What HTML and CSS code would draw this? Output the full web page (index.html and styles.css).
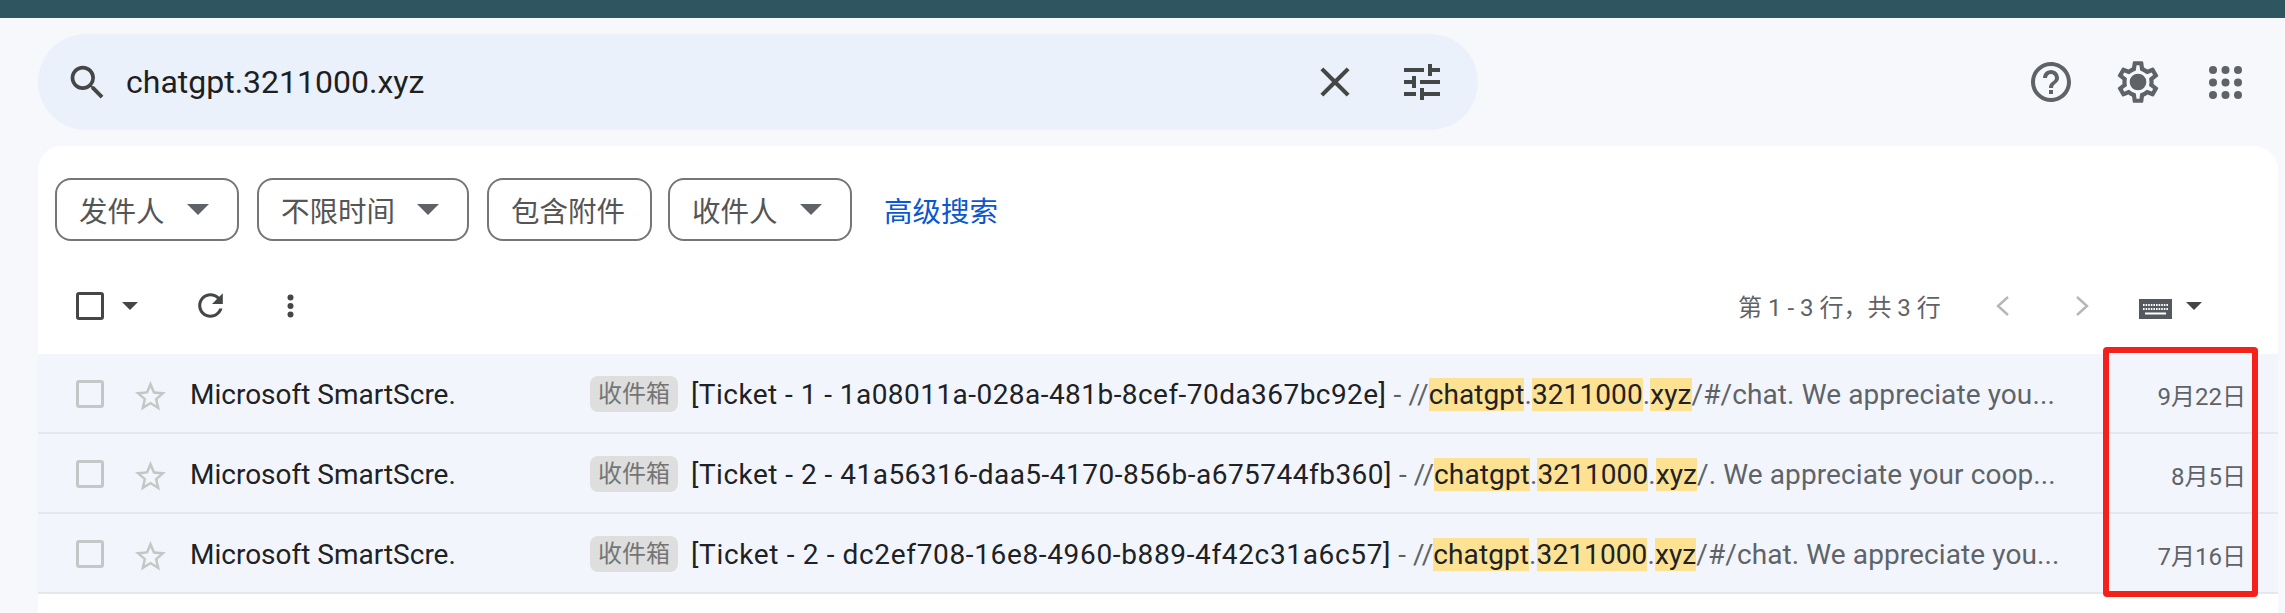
FILE: index.html
```html
<!DOCTYPE html>
<html lang="en">
<head>
  <meta charset="UTF-8">
  <meta name="viewport" content="width=device-width, initial-scale=1.0">
  <title>Search results</title>
  <link rel="stylesheet" href="styles.css">
</head>
<body>
  <div class="top-strip"></div>

  <header class="header">
    <div class="search-box">
      <svg class="icon-search" viewBox="0 0 24 24"><path d="M15.5 14h-.79l-.28-.27A6.471 6.471 0 0 0 16 9.5 6.5 6.5 0 1 0 9.5 16c1.61 0 3.09-.59 4.23-1.57l.27.28v.79l5 4.99L20.49 19l-4.99-5zm-6 0C7.01 14 5 11.99 5 9.5S7.01 5 9.5 5 14 7.01 14 9.5 11.99 14 9.5 14z"/></svg>
      <div class="search-text">chatgpt.3211000.xyz</div>
      <svg class="icon-close" viewBox="0 0 24 24"><path d="M19 6.41 17.59 5 12 10.59 6.41 5 5 6.41 10.59 12 5 17.59 6.41 19 12 13.41 17.59 19 19 17.59 13.41 12z"/></svg>
      <svg class="icon-tune" viewBox="0 0 24 24"><path d="M3 17v2h6v-2H3zM3 5v2h10V5H3zm10 16v-2h8v-2h-8v-2h-2v6h2zM7 9v2H3v2h4v2h2V9H7zm14 4v-2H11v2h10zm-6-4h2V7h4V5h-4V3h-2v6z"/></svg>
    </div>
    <div class="header-actions">
      <svg class="icon-help" viewBox="0 0 24 24"><path d="M11 18h2v-2h-2v2zm1-16C6.48 2 2 6.48 2 12s4.48 10 10 10 10-4.48 10-10S17.52 2 12 2zm0 18c-4.41 0-8-3.59-8-8s3.59-8 8-8 8 3.59 8 8-3.59 8-8 8zm0-14c-2.21 0-4 1.79-4 4h2c0-1.1.9-2 2-2s2 .9 2 2c0 2-3 1.75-3 5h2c0-2.25 3-2.5 3-5 0-2.21-1.79-4-4-4z"/></svg>
      <svg class="icon-gear" viewBox="0 0 24 24"><path d="M19.43 12.98c.04-.32.07-.64.07-.98 0-.34-.03-.66-.07-.98l2.11-1.65c.19-.15.24-.42.12-.64l-2-3.46c-.09-.16-.26-.25-.44-.25-.06 0-.12.01-.17.03l-2.49 1c-.52-.4-1.08-.73-1.69-.98l-.38-2.65C14.46 2.18 14.25 2 14 2h-4c-.25 0-.46.18-.49.42l-.38 2.65c-.61.25-1.17.59-1.69.98l-2.49-1c-.06-.02-.12-.03-.18-.03-.17 0-.34.09-.43.25l-2 3.46c-.13.22-.07.49.12.64l2.11 1.65c-.04.32-.07.65-.07.98 0 .33.03.66.07.98l-2.11 1.65c-.19.15-.24.42-.12.64l2 3.46c.09.16.26.25.44.25.06 0 .12-.01.17-.03l2.49-1c.52.4 1.08.73 1.69.98l.38 2.65c.03.24.24.42.49.42h4c.25 0 .46-.18.49-.42l.38-2.65c.61-.25 1.17-.59 1.69-.98l2.49 1c.06.02.12.03.18.03.17 0 .34-.09.43-.25l2-3.46c.12-.22.07-.49-.12-.64l-2.11-1.65zm-1.98-1.71c.04.31.05.52.05.73 0 .21-.02.43-.05.73l-.14 1.13.89.7 1.08.84-.7 1.21-1.27-.51-1.04-.42-.9.68c-.43.32-.84.56-1.25.73l-1.06.43-.16 1.13-.2 1.35h-1.4l-.19-1.35-.16-1.13-1.06-.43c-.43-.18-.83-.41-1.23-.71l-.91-.7-1.06.43-1.27.51-.7-1.21 1.08-.84.89-.7-.14-1.13c-.03-.31-.05-.54-.05-.74s.02-.43.05-.73l.14-1.13-.89-.7-1.08-.84.7-1.21 1.27.51 1.04.42.9-.68c.43-.32.84-.56 1.25-.73l1.06-.43.16-1.13.2-1.35h1.39l.19 1.35.16 1.13 1.06.43c.43.18.83.41 1.23.71l.91.7 1.06-.43 1.27-.51.7 1.21-1.07.85-.89.7.14 1.13z"/><circle cx="12" cy="12" r="4"/></svg>
      <svg class="icon-apps" viewBox="0 0 33 33"><circle cx="4" cy="4" r="4"/><circle cx="16.5" cy="4" r="4"/><circle cx="29" cy="4" r="4"/><circle cx="4" cy="16.5" r="4"/><circle cx="16.5" cy="16.5" r="4"/><circle cx="29" cy="16.5" r="4"/><circle cx="4" cy="29" r="4"/><circle cx="16.5" cy="29" r="4"/><circle cx="29" cy="29" r="4"/></svg>
    </div>
  </header>

  <main class="card">
    <div class="chips">
      <div class="chip chip-from">发件人<span class="caret"></span></div>
      <div class="chip chip-time">不限时间<span class="caret"></span></div>
      <div class="chip chip-attach">包含附件</div>
      <div class="chip chip-to">收件人<span class="caret"></span></div>
      <a class="advanced" href="#">高级搜索</a>
    </div>

    <div class="toolbar">
      <span class="check check-dark"></span>
      <span class="caret caret-small"></span>
      <svg class="icon-refresh" viewBox="0 0 24 24"><path d="M17.65 6.35C16.2 4.9 14.21 4 12 4c-4.42 0-7.99 3.58-7.99 8s3.57 8 7.99 8c3.73 0 6.84-2.55 7.73-6h-2.08c-.82 2.33-3.04 4-5.65 4-3.31 0-6-2.69-6-6s2.69-6 6-6c1.66 0 3.14.69 4.22 1.78L13 11h7V4l-2.35 2.35z"/></svg>
      <svg class="icon-more" viewBox="0 0 8 24"><circle cx="4" cy="3.5" r="3"/><circle cx="4" cy="12" r="3"/><circle cx="4" cy="20.5" r="3"/></svg>
      <div class="pager-text">第 1 - 3 行，共 3 行</div>
      <svg class="chevron chevron-left" viewBox="0 0 14 20"><polyline points="12,1 2,10 12,19"/></svg>
      <svg class="chevron chevron-right" viewBox="0 0 14 20"><polyline points="2,1 12,10 2,19"/></svg>
      <svg class="icon-keyboard" viewBox="0 0 33 20"><rect width="33" height="20"/><line class="keys" x1="4" y1="6" x2="29" y2="6"/><line class="keys" x1="4" y1="10" x2="29" y2="10"/><line class="keys keys-space" x1="6" y1="14.5" x2="27" y2="14.5"/></svg>
      <span class="caret caret-small caret-keyboard"></span>
    </div>

    <div class="row">
      <span class="check"></span>
      <svg class="icon-star" viewBox="0 0 24 24"><path d="M22 9.24l-7.19-.62L12 2 9.19 8.63 2 9.24l5.46 4.73L5.82 21 12 17.27 18.18 21l-1.63-7.03L22 9.24zM12 15.4l-3.76 2.27 1-4.28-3.32-2.88 4.38-.38L12 6.1l1.71 4.04 4.38.38-3.32 2.88 1 4.28L12 15.4z"/></svg>
      <div class="sender">Microsoft SmartScre.</div>
      <span class="label">收件箱</span>
      <div class="subject">[Ticket - 1 - 1a08011a-028a-481b-8cef-70da367bc92e]<span class="snippet"> - //<span class="hl">chatgpt</span>.<span class="hl">3211000</span>.<span class="hl">xyz</span>/#/chat. We appreciate you...</span></div>
      <div class="date">9月22日</div>
    </div>
    <div class="row">
      <span class="check"></span>
      <svg class="icon-star" viewBox="0 0 24 24"><path d="M22 9.24l-7.19-.62L12 2 9.19 8.63 2 9.24l5.46 4.73L5.82 21 12 17.27 18.18 21l-1.63-7.03L22 9.24zM12 15.4l-3.76 2.27 1-4.28-3.32-2.88 4.38-.38L12 6.1l1.71 4.04 4.38.38-3.32 2.88 1 4.28L12 15.4z"/></svg>
      <div class="sender">Microsoft SmartScre.</div>
      <span class="label">收件箱</span>
      <div class="subject subject-mid">[Ticket - 2 - 41a56316-daa5-4170-856b-a675744fb360]<span class="snippet"> - //<span class="hl">chatgpt</span>.<span class="hl">3211000</span>.<span class="hl">xyz</span>/. We appreciate your coop...</span></div>
      <div class="date">8月5日</div>
    </div>
    <div class="row">
      <span class="check"></span>
      <svg class="icon-star" viewBox="0 0 24 24"><path d="M22 9.24l-7.19-.62L12 2 9.19 8.63 2 9.24l5.46 4.73L5.82 21 12 17.27 18.18 21l-1.63-7.03L22 9.24zM12 15.4l-3.76 2.27 1-4.28-3.32-2.88 4.38-.38L12 6.1l1.71 4.04 4.38.38-3.32 2.88 1 4.28L12 15.4z"/></svg>
      <div class="sender">Microsoft SmartScre.</div>
      <span class="label">收件箱</span>
      <div class="subject subject-wide">[Ticket - 2 - dc2ef708-16e8-4960-b889-4f42c31a6c57]<span class="snippet"> - //<span class="hl">chatgpt</span>.<span class="hl">3211000</span>.<span class="hl">xyz</span>/#/chat. We appreciate you...</span></div>
      <div class="date">7月16日</div>
    </div>
  </main>

  <div class="red-box"></div>
</body>
</html>
```

FILE: styles.css
```css
html, body {
  height: 613px;
  overflow: hidden;
}
body {
  margin: 0;
  background-color: #f6f8fc;
  color: #1f1f1f;
  font-family: Roboto, "Noto Sans CJK SC", sans-serif;
}
svg {
  display: block;
  flex: none;
  fill: #444746;
}
.top-strip {
  height: 18px;
  background-color: #2f5560;
}

/* header */
.header {
  display: flex;
  align-items: center;
  height: 96px;
  padding: 16px 0 16px 38px;
}
.search-box {
  display: flex;
  align-items: center;
  width: 1440px;
  height: 96px;
  background-color: #eaf1fb;
  border-radius: 48px;
}
.icon-search {
  width: 45px;
  height: 45px;
  margin: 0 0 0 27px;
}
.search-text {
  flex: 1;
  margin-left: 16px;
  font-size: 32px;
  color: #1f1f1f;
}
.icon-close {
  width: 50px;
  height: 50px;
}
.icon-tune {
  width: 48px;
  height: 48px;
  margin: 0 32px 0 38px;
}
.header-actions {
  display: flex;
  align-items: center;
  margin-left: 549px;
}
.icon-help {
  width: 48px;
  height: 48px;
  fill: #5f6368;
}
.icon-gear {
  width: 50px;
  height: 50px;
  margin-left: 38px;
  fill: #5f6368;
}
.icon-apps {
  width: 33px;
  height: 33px;
  margin-left: 46px;
  fill: #5f6368;
}

/* card */
.card {
  width: 2240px;
  height: 467px;
  margin-left: 38px;
  background: white;
  border-radius: 24px 24px 0 0;
}
.chips {
  display: flex;
  align-items: center;
  height: 63px;
  padding: 32px 0 0 17px;
}
.chip {
  display: flex;
  align-items: center;
  box-sizing: border-box;
  height: 63px;
  margin-right: 18px;
  padding-left: 22px;
  border: 2px solid #747775;
  border-radius: 16px;
  font-size: 28.5px;
  color: #555;
}
.chip-from { width: 184px; }
.chip-time { width: 212px; }
.chip-attach { width: 165px; margin-right: 16px; }
.chip-to { width: 184px; }
.caret {
  width: 0;
  height: 0;
  margin-left: 22px;
  border-left: 11px solid transparent;
  border-right: 11px solid transparent;
  border-top: 11px solid #5f6368;
}
.advanced {
  margin-left: 14px;
  font-size: 28.5px;
  color: #0b57d0;
  text-decoration: none;
}

/* toolbar */
.toolbar {
  display: flex;
  align-items: center;
  box-sizing: border-box;
  height: 113px;
  padding: 16px 0 0 38px;
}
.check {
  flex: none;
  box-sizing: border-box;
  width: 28px;
  height: 28px;
  border: 3px solid #c4c7c5;
  border-radius: 3px;
}
.check-dark {
  border-color: #444746;
}
.caret-small {
  margin-left: 18px;
  border-left-width: 8px;
  border-right-width: 8px;
  border-top-width: 8px;
  border-top-color: #444746;
}
.icon-refresh {
  width: 37px;
  height: 37px;
  margin-left: 54px;
}
.icon-more {
  width: 9px;
  height: 24px;
  margin-left: 57px;
}
.pager-text {
  width: 206px;
  margin-left: 1443px;
  font-size: 24px;
  color: #5f6368;
  white-space: nowrap;
}
.chevron {
  width: 14px;
  height: 20px;
  fill: none;
  stroke: #b4b6b8;
  stroke-width: 2.4;
}
.chevron-left { margin-left: 52px; }
.chevron-right { margin-left: 65px; }
.icon-keyboard {
  width: 33px;
  height: 20px;
  margin: 7px 0 0 50px;
  fill: #55585c;
}
.keys {
  stroke: white;
  stroke-width: 2;
  stroke-dasharray: 1.6 1;
}
.keys-space {
  stroke-dasharray: none;
}
.caret-keyboard {
  margin: 0 0 0 14px;
}

/* rows */
.row {
  display: flex;
  align-items: center;
  box-sizing: border-box;
  height: 80px;
  padding: 2px 32px 0 38px;
  background-color: #f2f6fc;
  border-bottom: 2px solid #e3e8ef;
}
.icon-star {
  width: 37px;
  height: 37px;
  margin: 4px 0 0 28px;
  fill: #c4c7c5;
}
.sender {
  flex: none;
  width: 400px;
  margin-left: 21px;
  font-size: 28px;
  color: #202124;
}
.label {
  flex: none;
  width: 88px;
  height: 36px;
  margin-right: 13px;
  background-color: #dedede;
  border-radius: 8px;
  font-size: 24px;
  line-height: 36px;
  text-align: center;
  color: #757575;
}
.subject {
  flex: 1;
  font-size: 28px;
  letter-spacing: 0.45px;
  color: #202124;
  white-space: nowrap;
  overflow: hidden;
}
.subject-mid { letter-spacing: 0.48px; }
.subject-wide { letter-spacing: 0.65px; }
.snippet {
  letter-spacing: 0.1px;
  color: #5f6368;
}
.hl {
  background-color: #fde293;
  color: #202124;
}
.date {
  flex: none;
  font-size: 24px;
  color: #5f6368;
}

/* red annotation over the dates */
.red-box {
  position: absolute;
  left: 2103px;
  top: 347px;
  box-sizing: border-box;
  width: 155px;
  height: 250px;
  border: 6px solid #f5201a;
  border-radius: 4px;
}
```
